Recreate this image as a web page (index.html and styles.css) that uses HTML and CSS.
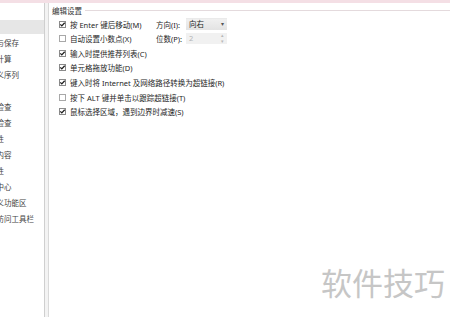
FILE: index.html
```html
<!DOCTYPE html>
<html lang="zh-CN">
<head>
  <meta charset="UTF-8">
  <meta name="viewport" content="width=device-width, initial-scale=1.0">
  <title>选项 - 编辑</title>
  <link rel="stylesheet" href="styles.css">
</head>
<body>
  <div class="topbar"></div>

  <div class="window">
    <!-- Left option list (clipped by the screenshot edge) -->
    <nav class="sidebar">
      <div class="nav-item active">编辑</div>
      <div class="nav-item">常规与保存</div>
      <div class="nav-item">重新计算</div>
      <div class="nav-item">自定义序列</div>
      <div class="nav-item">图表</div>
      <div class="nav-item">错误检查</div>
      <div class="nav-item">拼写检查</div>
      <div class="nav-item">安全性</div>
      <div class="nav-item">共享内容</div>
      <div class="nav-item">兼容性</div>
      <div class="nav-item">信任中心</div>
      <div class="nav-item">自定义功能区</div>
      <div class="nav-item">快速访问工具栏</div>
    </nav>

    <div class="divider"></div>

    <!-- Edit settings group -->
    <main class="content">
      <div class="group-title"><span>编辑设置</span></div>

      <div class="row">
        <label class="opt wide">
          <svg class="box" viewBox="0 0 7 7"><rect x=".5" y=".5" width="6" height="6" fill="#fff" stroke="#8a8a8a"/><path d="M1.3 3.4 L2.8 4.9 L5.7 1.7" fill="none" stroke="#1e1e1e" stroke-width="1.3"/></svg>
          按 Enter 键后移动(M)
        </label>
        <span class="field-label">方向(I):</span>
        <div class="select">向右<span class="arrow">▾</span></div>
      </div>

      <div class="row">
        <label class="opt wide">
          <svg class="box" viewBox="0 0 7 7"><rect x=".5" y=".5" width="6" height="6" fill="#fff" stroke="#a8a8a8"/></svg>
          自动设置小数点(X)
        </label>
        <span class="field-label">位数(P):</span>
        <div class="spin disabled">2<span class="spin-arrows"><i>▴</i><i>▾</i></span></div>
      </div>

      <div class="row">
        <label class="opt">
          <svg class="box" viewBox="0 0 7 7"><rect x=".5" y=".5" width="6" height="6" fill="#fff" stroke="#8a8a8a"/><path d="M1.3 3.4 L2.8 4.9 L5.7 1.7" fill="none" stroke="#1e1e1e" stroke-width="1.3"/></svg>
          输入时提供推荐列表(C)
        </label>
      </div>

      <div class="row">
        <label class="opt">
          <svg class="box" viewBox="0 0 7 7"><rect x=".5" y=".5" width="6" height="6" fill="#fff" stroke="#8a8a8a"/><path d="M1.3 3.4 L2.8 4.9 L5.7 1.7" fill="none" stroke="#1e1e1e" stroke-width="1.3"/></svg>
          单元格拖放功能(D)
        </label>
      </div>

      <div class="row">
        <label class="opt">
          <svg class="box" viewBox="0 0 7 7"><rect x=".5" y=".5" width="6" height="6" fill="#fff" stroke="#8a8a8a"/><path d="M1.3 3.4 L2.8 4.9 L5.7 1.7" fill="none" stroke="#1e1e1e" stroke-width="1.3"/></svg>
          键入时将 Internet 及网络路径转换为超链接(R)
        </label>
      </div>

      <div class="row">
        <label class="opt">
          <svg class="box" viewBox="0 0 7 7"><rect x=".5" y=".5" width="6" height="6" fill="#fff" stroke="#a8a8a8"/></svg>
          按下 ALT 键并单击以跟踪超链接(T)
        </label>
      </div>

      <div class="row">
        <label class="opt">
          <svg class="box" viewBox="0 0 7 7"><rect x=".5" y=".5" width="6" height="6" fill="#fff" stroke="#8a8a8a"/><path d="M1.3 3.4 L2.8 4.9 L5.7 1.7" fill="none" stroke="#1e1e1e" stroke-width="1.3"/></svg>
          鼠标选择区域，遇到边界时减速(S)
        </label>
      </div>
    </main>
  </div>

  <div class="watermark">软件技巧</div>
</body>
</html>
```

FILE: styles.css
```css
body {
  margin: 0;
  width: 450px;
  height: 317px;
  overflow: hidden;
  background: #ffffff;
  color: #262626;
  font-family: 'Noto Sans', 'Noto Sans CJK SC', sans-serif;
  font-size: 7.5px;
}
.topbar {
  height: 3px;
  background: #f4dfe5;
}
.window {
  display: flex;
  height: 314px;
}
.sidebar {
  width: 44px;
  padding-top: 17px;
  display: flex;
  flex-direction: column;
  gap: 2px;
  overflow: hidden;
}
.nav-item {
  height: 14px;
  line-height: 14px;
  white-space: nowrap;
  overflow: hidden;
  text-indent: -18.5px;
  color: #444;
}
.nav-item.active {
  background: #e6e6e6;
}
.divider {
  width: 3px;
  background: #f3f3f3;
  border-left: 1px solid #cfcfcf;
  border-right: 1px solid #d9d9d9;
}
.content {
  flex: 1;
  padding-left: 3px;
}
.group-title {
  display: flex;
  align-items: center;
  height: 14px;
  gap: 3px;
  color: #333;
}
.group-title::after {
  content: "";
  flex: 1;
  border-top: 1px solid #e4dadd;
}
.row {
  display: flex;
  align-items: center;
  height: 14.57px;
  padding-left: 7px;
}
.opt {
  display: flex;
  align-items: center;
  gap: 4px;
  white-space: nowrap;
}
.opt.wide {
  width: 97px;
}
.box {
  width: 7px;
  height: 7px;
  flex: none;
}
.field-label {
  width: 30px;
  white-space: nowrap;
}
.select, .spin {
  position: relative;
  width: 38px;
  height: 11px;
  line-height: 11px;
  padding-left: 3px;
  box-sizing: content-box;
}
.select {
  background: linear-gradient(#f0f0f0, #e3e3e3);
  border-top: 1px solid #eaeaea;
}
.spin {
  background: #f1f1f1;
  color: #b4b4b4;
}
.arrow {
  position: absolute;
  right: 3px;
  top: 0;
  font-size: 6px;
  color: #555;
}
.spin-arrows {
  position: absolute;
  right: 3px;
  top: 0;
  display: flex;
  flex-direction: column;
  font-size: 5px;
  line-height: 5.5px;
  color: #b8b8b8;
}
.spin-arrows i {
  font-style: normal;
}
.watermark {
  position: absolute;
  left: 321px;
  top: 266px;
  font-family: 'Noto Sans CJK SC', sans-serif;
  font-size: 31px;
  line-height: 1;
  color: #c6c6c6;
}
```
